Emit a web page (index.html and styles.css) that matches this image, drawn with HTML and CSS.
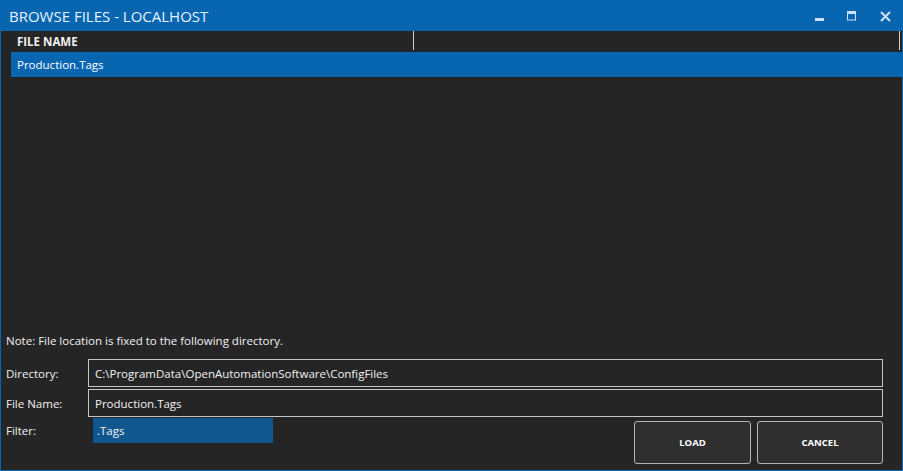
FILE: index.html
```html
<!DOCTYPE html>
<html lang="en">
<head>
    <meta charset="UTF-8">
    <title>Browse Files - localhost</title>
    <link rel="stylesheet" href="styles.css">
</head>
<body>

<div class="window">
    <div class="titlebar">
        <span class="title">BROWSE FILES - LOCALHOST</span>
        <div class="controls">
            <svg class="ctl-min" width="9" height="9" viewBox="0 0 9 9"><rect x="0" y="6" width="9" height="3" fill="#cfe2f4"/></svg>
            <svg class="ctl-max" width="9" height="10" viewBox="0 0 9 10"><rect x="0.5" y="0.5" width="8" height="8.5" fill="none" stroke="#cfe2f4"/><rect x="0" y="0" width="9" height="3" fill="#cfe2f4"/></svg>
            <svg class="ctl-close" width="11" height="11" viewBox="0 0 11 11"><path d="M1 1 L10 10 M10 1 L1 10" stroke="#cfe2f4" stroke-width="2"/></svg>
        </div>
    </div>

    <div class="content">
        <div class="grid-header">
            <div class="col col-name">FILE NAME</div>
            <div class="col col-rest"></div>
        </div>
        <div class="list">
            <div class="row selected">Production.Tags</div>
        </div>

        <div class="form">
            <div class="note">Note: File location is fixed to the following directory.</div>
            <div class="field">
                <label>Directory:</label>
                <div class="input">C:\ProgramData\OpenAutomationSoftware\ConfigFiles</div>
            </div>
            <div class="field second">
                <label>File Name:</label>
                <div class="input">Production.Tags</div>
            </div>
            <div class="last-row">
                <label>Filter:</label>
                <div class="filter">.Tags</div>
                <div class="buttons">
                    <button class="btn load">LOAD</button>
                    <button class="btn">CANCEL</button>
                </div>
            </div>
        </div>
    </div>
</div>

</body>
</html>
```

FILE: styles.css
```css
* {
    box-sizing: border-box;
}
body {
    margin: 0;
    font-family: "Open Sans", "Noto Sans", sans-serif;
    background-color: #0866b1;
}
.window {
    width: 903px;
    height: 471px;
    display: flex;
    flex-direction: column;
    background-color: #0866b1;
    padding: 0 1px 1px 1px;
}
.titlebar {
    height: 31px;
    display: flex;
    align-items: center;
    padding-left: 8px;
    color: #e6f1fa;
}
.title {
    font-size: 15px;
    letter-spacing: 0;
}
.controls {
    margin-left: auto;
    display: flex;
    align-items: flex-start;
    align-self: flex-start;
    padding: 11px 11px 0 0;
}
.ctl-min {
    margin-top: 1px;
}
.ctl-max {
    margin-left: 23px;
}
.ctl-close {
    margin-left: 24px;
}
.content {
    flex: 1;
    display: flex;
    flex-direction: column;
    background-color: #252525;
    color: #f2f2f2;
    font-size: 11.5px;
}
.grid-header {
    height: 21px;
    display: flex;
    padding-bottom: 2px;
}
.col {
    border-right: 1px solid #cfcfcf;
    height: 19px;
    display: flex;
    align-items: center;
}
.col-name {
    width: 413px;
    padding-left: 16px;
    font-weight: bold;
    font-size: 11.5px;
    padding-top: 2px;
}
.col-rest {
    width: 486px;
}
.list {
    flex: 1;
}
.row {
    height: 25px;
    margin: 0 0 0 10px;
    padding-left: 6px;
    display: flex;
    align-items: center;
}
.selected {
    background-color: #0866b1;
    color: #ffffff;
}
.form {
    padding: 0 19px 6px 5px;
}
.note {
    height: 20px;
    line-height: 20px;
    margin-bottom: 8px;
}
.field {
    display: flex;
    align-items: center;
}
.field.second {
    margin-top: 2px;
}
label {
    width: 82px;
}
.input {
    flex: 1;
    height: 28px;
    border: 1px solid #c6c6c6;
    padding-left: 6px;
    display: flex;
    align-items: center;
}
.last-row {
    display: flex;
    align-items: flex-start;
    margin-top: 1px;
}
.last-row label {
    height: 25px;
    line-height: 25px;
}
.filter {
    margin-left: 5px;
    width: 180px;
    height: 25px;
    padding-left: 4px;
    line-height: 25px;
    background-color: #11578f;
}
.buttons {
    margin-left: auto;
    margin-top: 3px;
    display: flex;
    gap: 6px;
}
.btn {
    width: 126px;
    height: 43px;
    background-color: #2f2f2f;
    border: 1px solid #b4b4b4;
    border-radius: 3px;
    color: #ffffff;
    font-family: "Open Sans", "Noto Sans", sans-serif;
    font-weight: bold;
    font-size: 9.5px;
}
.btn.load {
    width: 117px;
}
```
